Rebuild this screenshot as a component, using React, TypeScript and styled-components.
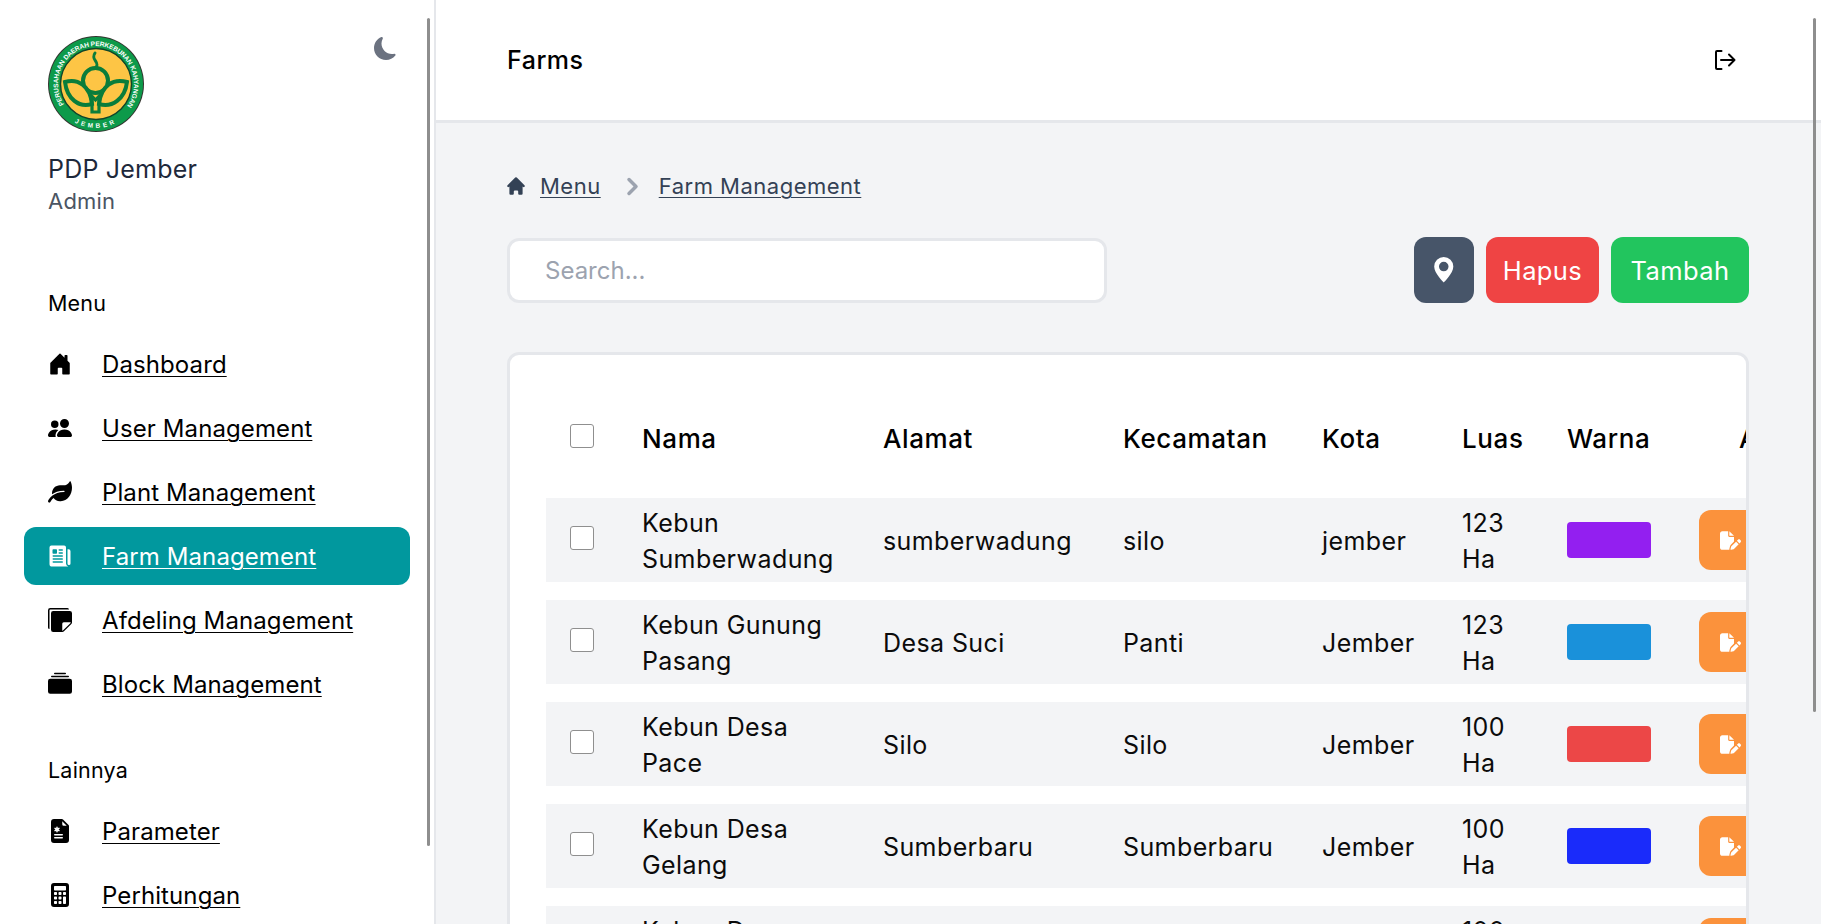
import React from "react";
import styled, { createGlobalStyle } from "styled-components";
import {
  BsCalculatorFill,
  BsCollectionFill,
  BsFileEarmarkMedicalFill,
  BsGeoAltFill,
  BsHouseDoorFill,
  BsMoonFill,
  BsPeopleFill,
  BsStickiesFill,
} from "react-icons/bs";
import { FaLeaf } from "react-icons/fa";
import { FaFilePen } from "react-icons/fa6";
import { HiChevronRight, HiHome } from "react-icons/hi";
import { IoNewspaper } from "react-icons/io5";

const GlobalStyle = createGlobalStyle`
  html, body {
    margin: 0;
    padding: 0;
    height: 100%;
    overflow: hidden;
    font-family: Inter, "Open Sans", sans-serif;
    color: #000;
  }
`;

const Shell = styled.div`
  display: flex;
  height: 924px;
  overflow: hidden;
  position: relative;
  background: #f3f4f6;
`;

const Sidebar = styled.aside`
  width: 434px;
  flex: none;
  background: #fff;
  border-right: 2px solid #e5e7eb;
  padding-top: 36px;
  overflow: hidden;
  position: relative;
`;

const Thumb = styled.div<{ $right: number; $height: number }>`
  position: absolute;
  top: 18px;
  right: ${(p) => p.$right}px;
  width: 3px;
  height: ${(p) => p.$height}px;
  background: #8e8e8e;
  border-radius: 2px;
`;

const Profile = styled.div`
  padding: 0 48px;
  margin-bottom: 75px;
  position: relative;
`;

const Moon = styled.div`
  position: absolute;
  top: 1px;
  right: 37px;
  color: #6b7280;
  font-size: 23px;
  line-height: 0;
`;

const Name = styled.div`
  margin-top: 13px;
  font-size: 25px;
  line-height: 40px;
  letter-spacing: 0.2px;
  color: #1e293b;
`;

const Role = styled.div`
  margin-top: -1px;
  font-size: 22px;
  line-height: 26px;
  letter-spacing: 0.2px;
  color: #4b5563;
`;

const SectionLabel = styled.div<{ $top?: number }>`
  margin: ${(p) => p.$top ?? 0}px 0 18px 48px;
  font-size: 21.5px;
  line-height: 28px;
  letter-spacing: 0.2px;
`;

const NavList = styled.nav`
  display: flex;
  flex-direction: column;
  gap: 6px;
  padding: 0 24px;
  width: 386px;
`;

const NavItem = styled.div<{ $active?: boolean }>`
  display: flex;
  align-items: center;
  height: 58px;
  flex: none;
  padding-left: 24px;
  border-radius: 12px;
  background: ${(p) => (p.$active ? "#01989e" : "transparent")};
  color: ${(p) => (p.$active ? "#fff" : "#000")};
`;

const NavIcon = styled.span`
  width: 24px;
  height: 24px;
  font-size: 24px;
  line-height: 0;
  margin-right: 30px;
  flex: none;
`;

const NavText = styled.a`
  font-size: 24px;
  line-height: 32px;
  padding-top: 2px;
  letter-spacing: 0.1px;
  text-decoration: underline;
  text-underline-offset: 3px;
  text-decoration-thickness: 1px;
  color: inherit;
`;

const Main = styled.main`
  flex: 1;
  min-width: 0;
  display: flex;
  flex-direction: column;
`;

const Header = styled.header`
  height: 120px;
  flex: none;
  background: #fff;
  border-bottom: 3px solid #e5e7eb;
  display: flex;
  align-items: center;
  justify-content: space-between;
  padding: 0 85px 0 71px;
`;

const Title = styled.h1`
  margin: 0;
  font-size: 25px;
  font-weight: 500;
  letter-spacing: 0.5px;
`;

const Content = styled.div`
  padding: 48px 72px 0 71px;
`;

const Crumbs = styled.div`
  display: flex;
  align-items: center;
  height: 30px;
  margin-bottom: 36px;
  color: #334155;
`;

const CrumbText = styled.a`
  font-size: 22px;
  line-height: 30px;
  letter-spacing: 0.5px;
  text-decoration: underline;
  text-underline-offset: 3px;
  text-decoration-thickness: 1px;
  color: inherit;
`;

const CrumbHome = styled(HiHome)`
  font-size: 22px;
  margin: 0 13px 0 -2px;
  flex: none;
`;

const CrumbSep = styled(HiChevronRight)`
  font-size: 35px;
  color: #9ca3af;
  margin: 0 9px 0 14px;
  flex: none;
`;

const Toolbar = styled.div`
  display: flex;
  align-items: center;
  height: 66px;
  margin-bottom: 49px;
`;

const Search = styled.input`
  width: 600px;
  height: 65px;
  box-sizing: border-box;
  border: 3px solid #e5e7eb;
  border-radius: 12px;
  padding: 0 35px;
  background: #fff;
  font: 400 24px Inter, sans-serif;
  outline: none;
  &::placeholder {
    color: #9ca3af;
    opacity: 1;
  }
`;

const Actions = styled.div`
  margin-left: auto;
  display: flex;
  gap: 12px;
`;

const ActionButton = styled.button<{ $bg: string; $w: number }>`
  width: ${(p) => p.$w}px;
  height: 66px;
  border: 0;
  border-radius: 12px;
  background: ${(p) => p.$bg};
  color: #fff;
  font: 400 25.5px Inter, sans-serif;
  letter-spacing: 0.4px;
  display: flex;
  align-items: center;
  justify-content: center;
  padding: 0;
`;

const Card = styled.section`
  border: 3px solid #e5e7eb;
  border-radius: 12px;
  background: #fff;
  overflow: hidden;
  padding: 23px 0 0 36px;
  height: 600px;
`;

const Table = styled.table`
  table-layout: fixed;
  width: 1289px;
  border-collapse: separate;
  border-spacing: 0 18px;
`;

const HeadCell = styled.th<{ $center?: boolean }>`
  height: 84px;
  padding: 0;
  text-align: ${(p) => (p.$center ? "center" : "left")};
  font-size: 26px;
  font-weight: 500;
  letter-spacing: 0.6px;
`;

const Row = styled.tr`
  background: #f3f4f6;
`;

const Cell = styled.td`
  height: 84px;
  padding: 0;
  font-size: 25px;
  line-height: 36px;
  letter-spacing: 0.4px;
  color: #0b0b0b;
  vertical-align: middle;
`;

const Wrap = styled.span<{ $w?: number }>`
  display: block;
  width: ${(p) => (p.$w ? `${p.$w}px` : "auto")};
  padding-top: 2px;
`;

const CheckCell = styled.div`
  padding: 0 0 4px 24px;
  display: flex;
  align-items: center;
`;

const Check = styled.span`
  width: 24px;
  height: 24px;
  box-sizing: border-box;
  border: 1.5px solid #8f8f8f;
  border-radius: 3px;
  background: #fff;
  display: block;
`;

const Swatch = styled.div<{ $color: string }>`
  width: 84px;
  height: 36px;
  border-radius: 4px;
  background: ${(p) => p.$color};
`;

const EditButton = styled.div`
  width: 60px;
  height: 60px;
  padding-left: 3px;
  box-sizing: border-box;
  border-radius: 12px;
  background: #fb923c;
  color: #fff;
  font-size: 21px;
  display: flex;
  align-items: center;
  justify-content: center;
`;

function Logo() {
  return (
    <svg width="96" height="96" viewBox="0 0 96 96">
      <defs>
        <path id="logo-top" d="M16 68.5A38 38 0 1 1 80 68.5" />
        <path id="logo-bottom" d="M26 86A44 44 0 0 0 70 86" />
      </defs>
      <circle cx="48" cy="48" r="48" fill="#33352f" />
      <circle cx="48" cy="48" r="47" fill="#0d9a4a" />
      <circle cx="48" cy="48" r="35.5" fill="#fdc545" stroke="#11442a" strokeWidth="1.4" />
      <text fontFamily="Liberation Sans, sans-serif" fontWeight="700" fontSize="6.6" fill="#fff">
        <textPath href="#logo-top" textLength="164" lengthAdjust="spacing">
          PERUSAHAAN DAERAH PERKEBUNAN KAHYANGAN
        </textPath>
      </text>
      <text fontFamily="Liberation Sans, sans-serif" fontWeight="700" fontSize="6.4" fill="#fff" letterSpacing="3" textAnchor="middle">
        <textPath href="#logo-bottom" startOffset="50%">
          JEMBER
        </textPath>
      </text>
      <g fill="none" stroke="#0a7d3b" strokeWidth="4">
        <path d="M47 17C42 24 53 26 47.5 32" strokeWidth="3" strokeLinecap="round" />
        <circle cx="47.5" cy="44.5" r="12.5" />
        <path d="M17 46C30 42 42 50 44 68C31 72 19 63 17 46Z" fill="#fdc545" />
        <path d="M79 46C65 42 53 50 51 68C64 72 77 63 79 46Z" fill="#fdc545" />
        <path d="M41 57L47.5 64L54 57M44 63V76H51V63" strokeWidth="3.2" />
      </g>
    </svg>
  );
}

function LogoutIcon() {
  return (
    <svg width="22" height="22" viewBox="0 0 22 22" fill="none" stroke="#000" strokeWidth="2" strokeLinecap="round" strokeLinejoin="round">
      <path d="M7.5 2H3a1 1 0 0 0-1 1v16a1 1 0 0 0 1 1h4.5" />
      <path d="M7 11h13.5M15 5.5l5.5 5.5l-5.5 5.5" />
    </svg>
  );
}

const menuItems = [
  { label: "Dashboard", icon: <BsHouseDoorFill /> },
  { label: "User Management", icon: <BsPeopleFill /> },
  { label: "Plant Management", icon: <FaLeaf /> },
  { label: "Farm Management", icon: <IoNewspaper />, active: true },
  { label: "Afdeling Management", icon: <BsStickiesFill /> },
  { label: "Block Management", icon: <BsCollectionFill /> },
];

const otherItems = [
  { label: "Parameter", icon: <BsFileEarmarkMedicalFill /> },
  { label: "Perhitungan", icon: <BsCalculatorFill /> },
];

const farms = [
  { name: "Kebun Sumberwadung", address: "sumberwadung", district: "silo", city: "jember", size: "123 Ha", color: "#931ff0" },
  { name: "Kebun Gunung Pasang", address: "Desa Suci", district: "Panti", city: "Jember", size: "123 Ha", color: "#1a91da" },
  { name: "Kebun Desa Pace", address: "Silo", district: "Silo", city: "Jember", size: "100 Ha", color: "#ec4747" },
  { name: "Kebun Desa Gelang", address: "Sumberbaru", district: "Sumberbaru", city: "Jember", size: "100 Ha", color: "#1a2bfa" },
  { name: "Kebun Desa Sumber", address: "Sumberbaru", district: "Sumberbaru", city: "Jember", size: "100 Ha", color: "#0d9a4a" },
];

const columns = [96, 241, 240, 199, 140, 105, 132, 136];

function App() {
  return (
    <Shell>
      <GlobalStyle />
      <Sidebar>
        <Profile>
          <Logo />
          <Moon>
            <BsMoonFill />
          </Moon>
          <Name>PDP Jember</Name>
          <Role>Admin</Role>
        </Profile>
        <SectionLabel>Menu</SectionLabel>
        <NavList>
          {menuItems.map((item) => (
            <NavItem key={item.label} $active={item.active}>
              <NavIcon>{item.icon}</NavIcon>
              <NavText>{item.label}</NavText>
            </NavItem>
          ))}
        </NavList>
        <SectionLabel $top={43}>Lainnya</SectionLabel>
        <NavList>
          {otherItems.map((item) => (
            <NavItem key={item.label}>
              <NavIcon>{item.icon}</NavIcon>
              <NavText>{item.label}</NavText>
            </NavItem>
          ))}
        </NavList>
        <Thumb $right={4} $height={828} />
      </Sidebar>
      <Main>
        <Header>
          <Title>Farms</Title>
          <LogoutIcon />
        </Header>
        <Content>
          <Crumbs>
            <CrumbHome />
            <CrumbText>Menu</CrumbText>
            <CrumbSep />
            <CrumbText>Farm Management</CrumbText>
          </Crumbs>
          <Toolbar>
            <Search placeholder="Search..." />
            <Actions>
              <ActionButton $bg="#475569" $w={60}>
                <BsGeoAltFill />
              </ActionButton>
              <ActionButton $bg="#ef4444" $w={113}>Hapus</ActionButton>
              <ActionButton $bg="#22c55e" $w={138}>Tambah</ActionButton>
            </Actions>
          </Toolbar>
          <Card>
            <Table>
              <colgroup>
                {columns.map((w, i) => (
                  <col key={i} width={w} />
                ))}
              </colgroup>
              <thead>
                <tr>
                  <HeadCell>
                    <CheckCell>
                      <Check />
                    </CheckCell>
                  </HeadCell>
                  <HeadCell>Nama</HeadCell>
                  <HeadCell>Alamat</HeadCell>
                  <HeadCell>Kecamatan</HeadCell>
                  <HeadCell>Kota</HeadCell>
                  <HeadCell>Luas</HeadCell>
                  <HeadCell>Warna</HeadCell>
                  <HeadCell $center>Aksi</HeadCell>
                </tr>
              </thead>
              <tbody>
                {farms.map((farm) => (
                  <Row key={farm.name}>
                    <Cell>
                      <CheckCell>
                        <Check />
                      </CheckCell>
                    </Cell>
                    <Cell>
                      <Wrap $w={200}>{farm.name}</Wrap>
                    </Cell>
                    <Cell>
                      <Wrap>{farm.address}</Wrap>
                    </Cell>
                    <Cell>
                      <Wrap>{farm.district}</Wrap>
                    </Cell>
                    <Cell>
                      <Wrap>{farm.city}</Wrap>
                    </Cell>
                    <Cell>
                      <Wrap $w={50}>{farm.size}</Wrap>
                    </Cell>
                    <Cell>
                      <Swatch $color={farm.color} />
                    </Cell>
                    <Cell>
                      <EditButton>
                        <FaFilePen />
                      </EditButton>
                    </Cell>
                  </Row>
                ))}
              </tbody>
            </Table>
          </Card>
        </Content>
      </Main>
      <Thumb $right={5} $height={694} />
    </Shell>
  );
}

export default App;
